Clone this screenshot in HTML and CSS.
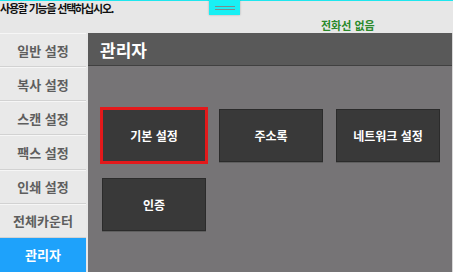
FILE: index.html
```html
<!DOCTYPE html>
<html lang="ko">
<head>
<meta charset="utf-8">
<link rel="stylesheet" href="styles.css">
</head>
<body>
<div class="screen">
  <div class="topbar">
    <div class="prompt">사용할 기능을 선택하십시오.</div>
    <div class="status">전화선 없음</div>
    <div class="handle"><span></span><span></span></div>
  </div>
  <div class="main">
    <nav class="sidebar">
      <div class="nav-item">일반 설정</div>
      <div class="nav-item">복사 설정</div>
      <div class="nav-item">스캔 설정</div>
      <div class="nav-item">팩스 설정</div>
      <div class="nav-item">인쇄 설정</div>
      <div class="nav-item">전체카운터</div>
      <div class="nav-item active">관리자</div>
    </nav>
    <section class="panel">
      <header class="panel-head">관리자</header>
      <div class="panel-body">
        <div class="grid">
          <button class="tile focused">기본 설정</button>
          <button class="tile">주소록</button>
          <button class="tile">네트워크 설정</button>
          <button class="tile">인증</button>
        </div>
      </div>
    </section>
  </div>
</div>
</body>
</html>
```
FILE: styles.css
```css
html, body {
  margin: 0;
  padding: 0;
}
body {
  width: 453px;
  height: 272px;
  overflow: hidden;
  background: #e7e7e7;
  font-family: "Noto Sans CJK KR", "Noto Sans", sans-serif;
}
.screen {
  position: relative;
  width: 453px;
  height: 272px;
  display: flex;
  flex-direction: column;
}
.topbar {
  position: relative;
  height: 33px;
  border-top: 1px solid #1fe6ee;
  box-sizing: border-box;
}
.prompt {
  font-size: 11px;
  font-weight: 700;
  line-height: 15px;
  letter-spacing: -1.2px;
  color: #111;
}
.status {
  font-size: 11px;
  font-weight: 700;
  line-height: 15px;
  color: #2a8a2a;
  padding-left: 321px;
  margin-top: 2px;
}
.handle {
  position: absolute;
  left: 209px;
  top: -1px;
  width: 31px;
  height: 15px;
  background: #18f0f4;
  box-shadow: 0 0 2px rgba(0,0,0,0.25);
  display: flex;
  flex-direction: column;
  align-items: center;
  justify-content: center;
  gap: 2px;
}
.handle span {
  display: block;
  width: 20px;
  height: 1px;
  background: #7a8c8e;
}
.main {
  flex: 1;
  display: grid;
  grid-template-columns: 86px 1fr;
  column-gap: 2px;
  min-height: 0;
}
.sidebar {
  display: flex;
  flex-direction: column;
  background: #e9e9e9;
}
.nav-item {
  flex: 1;
  display: flex;
  align-items: center;
  justify-content: center;
  font-size: 13px;
  font-weight: 700;
  color: #5e5e5e;
  border-bottom: 1px solid #d2d2d2;
  border-top: 1px solid #f6f6f6;
}
.nav-item.active {
  background: #1ea2fb;
  color: #ffffff;
  border-color: #1ea2fb;
}
.panel {
  display: flex;
  flex-direction: column;
  border-right: 1px solid #d8d8d8;
}
.panel-head {
  height: 33px;
  background: #595959;
  color: #ffffff;
  font-size: 17px;
  font-weight: 700;
  display: flex;
  align-items: center;
  padding-left: 12px;
  border-bottom: 1px solid #404040;
  box-sizing: border-box;
}
.panel-body {
  flex: 1;
  background: #767476;
  padding: 43px 0 0 14px;
}
.grid {
  display: grid;
  grid-template-columns: repeat(3, 104px);
  grid-auto-rows: 53px;
  column-gap: 13px;
  row-gap: 16px;
}
.tile {
  margin: 0;
  padding: 0;
  background: #393939;
  border: 1px solid #2b2b2b;
  color: #ffffff;
  font-family: inherit;
  font-size: 12px;
  font-weight: 700;
  box-shadow: 0 1px 0 #5f5f5f;
}
.tile.focused {
  outline: 2px solid #e3191b;
  outline-offset: 0;
  border-color: #e3191b;
}
```
